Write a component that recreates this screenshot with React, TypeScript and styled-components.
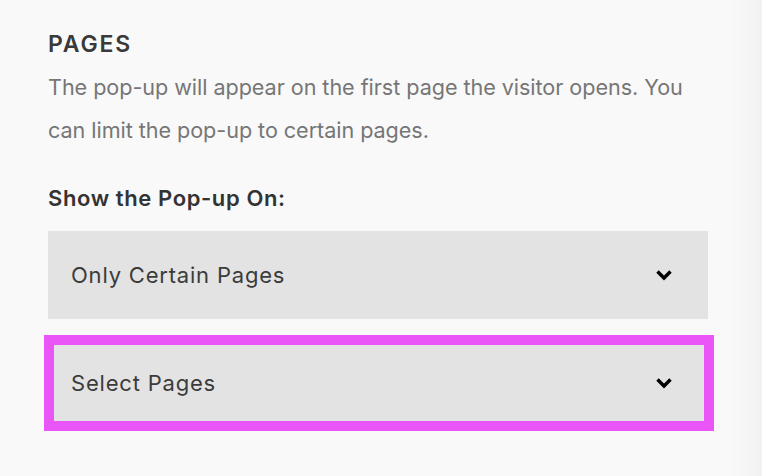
import styled, { createGlobalStyle } from 'styled-components';

const GlobalStyle = createGlobalStyle`
  html, body {
    margin: 0;
    padding: 0;
  }

  body {
    width: 762px;
    height: 476px;
    overflow: hidden;
    background: linear-gradient(to right, #f9f9f9 0, #f9f9f9 730px, #f1f1f1 762px);
    font-family: Inter, 'Noto Sans', sans-serif;
    -webkit-font-smoothing: antialiased;
  }
`;

const Panel = styled.section`
  width: 660px;
  padding: 29px 0 0 48px;
  display: flex;
  flex-direction: column;
`;

const Heading = styled.h2`
  margin: 0;
  font-size: 23px;
  line-height: 30px;
  font-weight: 600;
  letter-spacing: 1.8px;
  text-transform: uppercase;
  color: #3a3a3a;
`;

const Description = styled.p`
  margin: 7px 0 0;
  font-size: 21.6px;
  line-height: 43px;
  letter-spacing: -0.05px;
  color: #767676;
`;

const Label = styled.div`
  margin-top: 33px;
  font-size: 22px;
  line-height: 26px;
  font-weight: 600;
  letter-spacing: 0.6px;
  color: #333;
`;

const Select = styled.div<{ $highlight?: boolean }>`
  display: flex;
  align-items: center;
  justify-content: space-between;
  box-sizing: border-box;
  height: ${(p) => (p.$highlight ? '96px' : '88px')};
  margin: ${(p) => (p.$highlight ? '16px -6px 0 -4px' : '20px 0 0 0')};
  padding: ${(p) => (p.$highlight ? '0 31px 0 17px' : '0 35px 0 23px')};
  border: ${(p) => (p.$highlight ? '10px solid #e955f6' : 'none')};
  background: #e3e3e3;
  font-size: 22px;
  letter-spacing: 0.8px;
  color: #3b3b3b;
`;

const Chevron = () => (
  <svg width="18" height="12" viewBox="0 0 18 12" aria-hidden="true">
    <path
      d="M2.5 2.5 L9 9 L15.5 2.5"
      fill="none"
      stroke="#000"
      strokeWidth="3.4"
      strokeLinejoin="miter"
    />
  </svg>
);

export default function App() {
  return (
    <>
      <GlobalStyle />
      <Panel>
        <Heading>Pages</Heading>
        <Description>
          The pop-up will appear on the first page the visitor opens. You can
          limit the pop-up to certain pages.
        </Description>
        <Label>Show the Pop-up On:</Label>
        <Select>
          <span>Only Certain Pages</span>
          <Chevron />
        </Select>
        <Select $highlight>
          <span>Select Pages</span>
          <Chevron />
        </Select>
      </Panel>
    </>
  );
}
